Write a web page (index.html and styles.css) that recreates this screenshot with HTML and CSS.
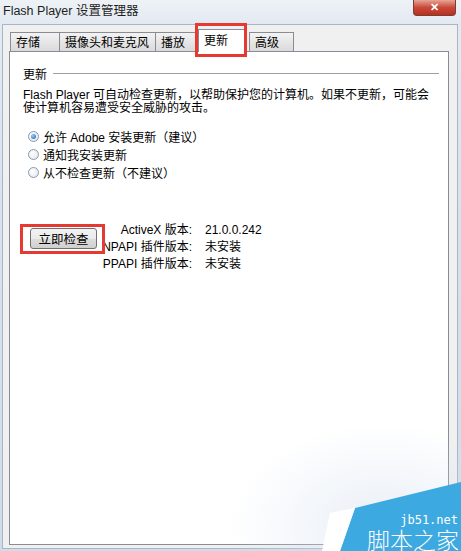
FILE: index.html
```html
<!DOCTYPE html>
<html lang="zh-CN">
<head>
    <meta charset="UTF-8">
    <title>Flash Player 设置管理器</title>
    <link rel="stylesheet" href="styles.css">
</head>
<body>

<div class="window">
    <!-- Title bar -->
    <div class="titlebar">
        <span class="title">Flash Player 设置管理器</span>
        <span class="close">&#x2715;</span>
    </div>

    <div class="client">
        <!-- Tabs -->
        <div class="tabs">
            <div class="tab tab-storage">存储</div>
            <div class="tab">摄像头和麦克风</div>
            <div class="tab tab-play">播放</div>
            <div class="tab active mark">更新</div>
            <div class="tab tab-adv">高级</div>
        </div>

        <div class="panel">
            <div class="group-title">
                <span>更新</span>
                <span class="rule"></span>
            </div>
            <p class="desc">Flash Player 可自动检查更新，以帮助保护您的计算机。如果不更新，可能会使计算机容易遭受安全威胁的攻击。</p>

            <div class="options">
                <label class="option"><span class="radio checked"></span>允许 Adobe 安装更新（建议）</label>
                <label class="option"><span class="radio"></span>通知我安装更新</label>
                <label class="option"><span class="radio"></span>从不检查更新（不建议）</label>
            </div>

            <div class="check-row">
                <div class="btn-wrap mark">
                    <button class="btn">立即检查</button>
                </div>
                <div class="versions">
                    <div class="v-row"><span class="v-label">ActiveX 版本:</span><span class="v-value">21.0.0.242</span></div>
                    <div class="v-row"><span class="v-label">NPAPI 插件版本:</span><span class="v-value">未安装</span></div>
                    <div class="v-row"><span class="v-label">PPAPI 插件版本:</span><span class="v-value">未安装</span></div>
                </div>
            </div>
        </div>
    </div>

    <!-- watermark -->
    <div class="watermark">
        <svg width="150" height="75" viewBox="0 0 150 75">
            <polygon points="150,6 150,75 29,75 44,32" fill="#3da9e1"/>
            <polygon points="19,37 44,32 29,75 11,75" fill="#ffffff"/>
        </svg>
        <span class="wm-url">jb51.net</span>
        <span class="wm-name">脚本之家</span>
    </div>
</div>

</body>
</html>
```

FILE: styles.css
```css
body {
    margin: 0;
    font-family: "Liberation Sans", "Noto Sans CJK SC", sans-serif;
    font-size: 12px;
    color: #000;
}
.window {
    position: relative;
    width: 461px;
    height: 551px;
    background: linear-gradient(#e4ebf3, #d6e2ef 40%, #cfdcec);
    overflow: hidden;
}
.titlebar {
    height: 24px;
    display: flex;
    justify-content: space-between;
    align-items: flex-start;
    padding-left: 3px;
    background: linear-gradient(#eef2f6, #e2e9f1);
}
.title {
    font-size: 12.5px;
    line-height: 22px;
    color: #1e1e1e;
}
.close {
    width: 43px;
    height: 16px;
    margin-right: 5px;
    border: 1px solid #7c3b34;
    border-top: none;
    border-radius: 0 0 4px 4px;
    background: linear-gradient(#e8a493, #c8493a 50%, #b8301f);
    color: #fff;
    font-size: 11px;
    font-weight: bold;
    text-align: center;
    line-height: 14px;
    box-sizing: border-box;
}
.client {
    margin: 0 3px 0 2px;
    height: 525px;
    background: #f0f0f0;
    border: 1px solid #a9b5c3;
    padding: 3px 8px 0 6px;
    box-sizing: border-box;
}
.tabs {
    display: flex;
    align-items: flex-end;
    height: 23px;
    padding-left: 1px;
    position: relative;
    z-index: 1;
}
.tab {
    height: 19px;
    line-height: 20px;
    padding: 0 6px 0 5px;
    border: 1px solid #898c95;
    border-bottom: none;
    margin-right: -1px;
    background: linear-gradient(#f3f3f3, #e6e6e6 50%, #dadada);
    font-size: 12px;
    box-sizing: border-box;
}
.tab-storage {
    width: 50px;
}
.tab-play {
    width: 42px;
}
.tab-adv {
    width: 45px;
}
.tab.active {
    height: 23px;
    width: 47px;
    margin: 0 4px -1px 2px;
    background: #fff;
    line-height: 22px;
}
.mark {
    position: relative;
}
.mark::after {
    content: "";
    position: absolute;
    border: 3px solid #e53a32;
}
.tab.mark::after {
    top: -7px;
    left: -4px;
    right: -3px;
    bottom: -5px;
}
.panel {
    height: 494px;
    background: #fff;
    border: 1px solid #898c95;
    padding: 13px 9px 0 13px;
    box-sizing: border-box;
}
.group-title {
    display: flex;
    align-items: center;
    gap: 6px;
    font-size: 12px;
    height: 16px;
}
.rule {
    flex: 1;
    border-top: 1px solid #a0a0a0;
    margin-top: 1px;
}
.desc {
    margin: 8px 0 0;
    font-size: 12px;
    line-height: 13px;
    width: 412px;
}
.options {
    margin-top: 12px;
    padding-left: 5px;
}
.option {
    display: flex;
    align-items: center;
    gap: 4px;
    height: 18px;
    font-size: 12px;
}
.radio {
    width: 11px;
    height: 11px;
    border-radius: 50%;
    border: 1px solid #8c9aa8;
    background: radial-gradient(circle at 40% 40%, #fff, #dde3ea);
    box-sizing: border-box;
    position: relative;
}
.radio.checked::after {
    content: "";
    position: absolute;
    left: 2px;
    top: 2px;
    width: 5px;
    height: 5px;
    border-radius: 50%;
    background: radial-gradient(circle at 35% 35%, #8fd0ff, #1d5fa8);
}
.check-row {
    display: flex;
    margin-top: 43px;
}
.btn-wrap {
    padding: 4px 8px 5px 10px;
    align-self: flex-start;
    margin-left: -3px;
}
.btn-wrap::after {
    top: 0;
    left: 0;
    right: 0;
    bottom: 0;
}
.btn {
    display: block;
    width: 67px;
    height: 21px;
    font-family: inherit;
    font-size: 12.5px;
    border: 1px solid #707070;
    border-radius: 3px;
    background: linear-gradient(#f2f2f2, #ebebeb 50%, #dddddd 51%, #cfcfcf);
    padding: 0;
}
.versions {
    margin-top: -2px;
    font-size: 12px;
}
.v-row {
    display: flex;
    height: 17px;
    line-height: 17px;
}
.v-label {
    width: 87px;
    display: flex;
    justify-content: flex-end;
    white-space: nowrap;
}
.v-value {
    padding-left: 13px;
    white-space: nowrap;
}
.watermark {
    position: absolute;
    right: 0;
    bottom: 0;
    width: 150px;
    height: 75px;
    color: #fff;
}
.watermark::before {
    content: "";
    position: absolute;
    left: -110px;
    top: -70px;
    width: 260px;
    height: 150px;
    background: radial-gradient(ellipse at 70% 80%, rgba(215, 226, 240, 0.55), rgba(255, 255, 255, 0) 60%);
}
.watermark svg {
    position: absolute;
    right: 0;
    bottom: 0;
}
.wm-url {
    position: absolute;
    right: 3px;
    bottom: 24px;
    font-family: "DejaVu Sans Mono", monospace;
    font-size: 12px;
    line-height: 13px;
}
.wm-name {
    position: absolute;
    right: 2px;
    bottom: 0;
    font-family: "Noto Sans CJK SC", sans-serif;
    font-size: 23px;
    line-height: 23px;
    font-weight: 300;
    letter-spacing: 0;
}
```
